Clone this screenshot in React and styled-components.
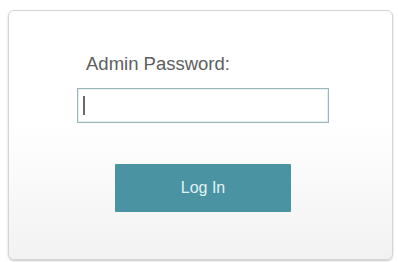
import React from 'react';
import styled, { createGlobalStyle } from 'styled-components';

const GlobalStyle = createGlobalStyle`
  html, body {
    margin: 0;
    padding: 0;
    background: #fff;
  }
  body {
    font-family: 'Liberation Sans', Arial, sans-serif;
  }
`;

const Page = styled.div`
  width: 398px;
  height: 262px;
  padding: 10px 5px 0 8px;
  box-sizing: border-box;
`;

const Card = styled.div`
  width: 385px;
  height: 250px;
  box-sizing: border-box;
  border: 1px solid #d4d4d4;
  border-radius: 6px;
  background: linear-gradient(to bottom, #ffffff 0%, #ffffff 45%, #f2f2f2 100%);
  box-shadow: 0 1px 2px rgba(0, 0, 0, 0.22);
  padding: 42px 0 0 68px;
`;

const Form = styled.div`
  width: 252px;
  display: flex;
  flex-direction: column;
`;

const Label = styled.label`
  font-size: 18.5px;
  line-height: 21px;
  color: #5e5e5e;
  margin-left: 9px;
`;

const Field = styled.div`
  margin-top: 14px;
  height: 35px;
  box-sizing: border-box;
  border: 1px solid #9cb6bb;
  box-shadow: inset 0 0 0 1px #e3eef0;
  background: #fff;
  display: flex;
  align-items: center;
  padding-left: 5px;
`;

const Caret = styled.span`
  width: 2px;
  height: 19px;
  background: #6a6a6a;
`;

const Button = styled.button`
  align-self: center;
  margin-top: 41px;
  width: 176px;
  height: 48px;
  border: none;
  border-radius: 1px;
  background: #4a93a3;
  color: #e4f2f4;
  font-family: 'Liberation Sans', Arial, sans-serif;
  font-size: 16px;
  cursor: pointer;
`;

export default function App() {
  return (
    <Page>
      <GlobalStyle />
      <Card>
        <Form>
          <Label>Admin Password:</Label>
          <Field>
            <Caret />
          </Field>
          <Button>Log In</Button>
        </Form>
      </Card>
    </Page>
  );
}
